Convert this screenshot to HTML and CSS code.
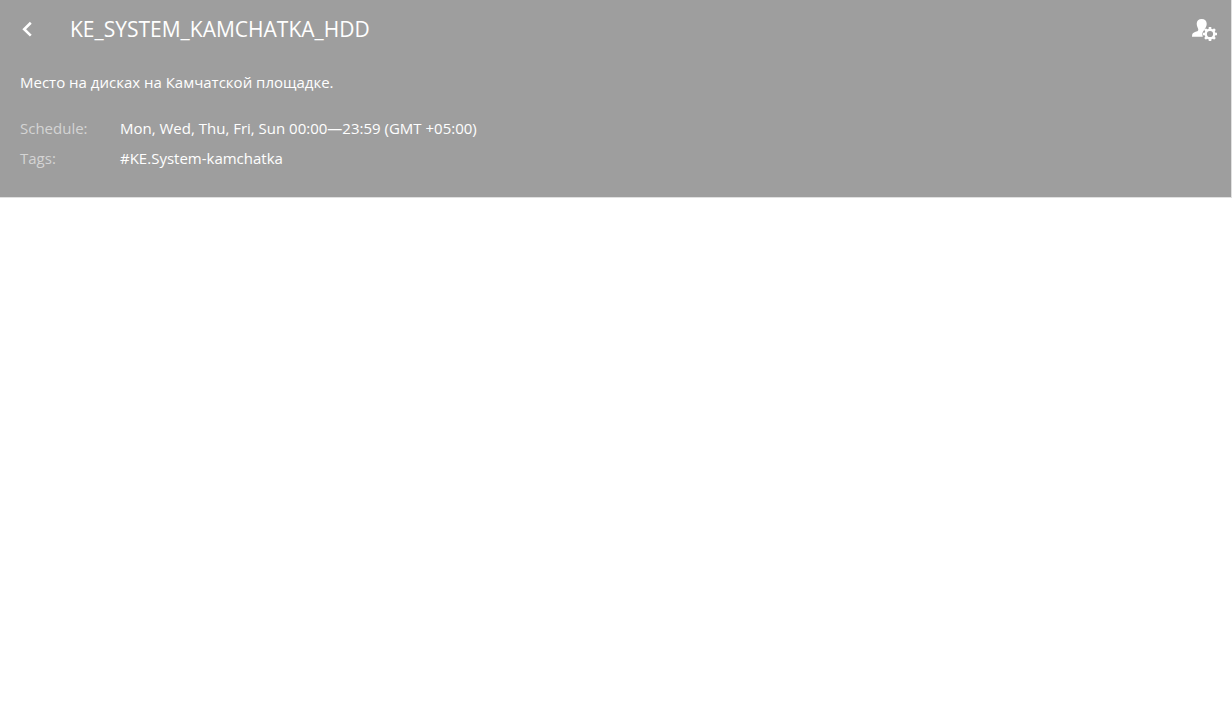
FILE: index.html
```html
<!DOCTYPE html>
<html lang="en">
<head>
<meta charset="utf-8">
<meta name="viewport" content="width=device-width, initial-scale=1">
<title>KE_SYSTEM_KAMCHATKA_HDD</title>
<link rel="stylesheet" href="styles.css">
</head>
<body>
<header class="trigger">
  <div class="trigger-bar">
    <a class="back-link" href="#" aria-label="Back">
      <svg width="14" height="16" viewBox="0 0 14 16" aria-hidden="true"><path d="M10.800 1.800 4.200 8.200l6.600 6.400" fill="none" stroke="#fff" stroke-width="2.600"/></svg>
    </a>
    <h1 class="trigger-title">KE_SYSTEM_KAMCHATKA_HDD</h1>
    <button class="user-button" type="button" aria-label="User settings">
      <svg width="26" height="24" viewBox="0 0 26 24" aria-hidden="true">
        <path d="M9.700 2c3.100 0 5 1.900 5 4.800 0 2-.7 3.700-1.900 5v1c-1.800 1.200-2.600 2.900-2.400 4.700.1 1 .2 1.500.4 2.200H0c0-2.700.8-3.900 3-4.600 2-.6 3.300-1.100 3.300-2.300 0-.8-.3-1.500-.7-2.300-.5-1-.9-2.200-.9-3.700C4.700 3.900 6.600 2 9.700 2Z" fill="#fff"/>
        <circle cx="18" cy="17" r="4.300" fill="none" stroke="#fff" stroke-width="2.400"/>
        <path d="M18 10v2.500M18 21.500V24M11 17h2.500M22.500 17H25M13.050 12.050l1.800 1.800M21.150 20.150l1.800 1.800M13.050 21.950l1.800-1.800M21.150 13.850l1.800-1.800" fill="none" stroke="#fff" stroke-width="2.600"/>
      </svg>
    </button>
  </div>
  <p class="description">Место на дисках на Камчатской площадке.</p>
  <dl class="details">
    <dt>Schedule:</dt>
    <dd>Mon, Wed, Thu, Fri, Sun 00:00—23:59 (GMT +05:00)</dd>
    <dt>Tags:</dt>
    <dd><a class="tag" href="#">#KE.System-kamchatka</a></dd>
  </dl>
</header>
</body>
</html>
```
FILE: styles.css
```css
body {
  margin: 0;
  background: #fff;
  color: #fff;
  font: 15px/20px "Segoe UI", "Open Sans", sans-serif;
}
.trigger {
  background: #9e9e9e;
  border-right: 1px solid #e0e0e0;
  border-bottom: 1px solid #e0e0e0;
  padding: 0 13px 29px 20px;
}
.trigger-bar {
  display: flex;
  align-items: center;
  height: 58px;
}
.back-link {
  display: flex;
  width: 50px;
}
.trigger-title {
  flex: 1;
  margin: 0;
  font-size: 21px;
  line-height: 30px;
  font-weight: 400;
}
.user-button {
  display: flex;
  padding: 0;
  border: 0;
  background: none;
}
.description {
  margin: 14px 0 26px;
}
.details {
  display: grid;
  grid-template-columns: 100px 1fr;
  row-gap: 10px;
  margin: 0;
}
.details dt {
  color: #d4d4d4;
}
.details dd {
  margin: 0;
}
.tag {
  color: inherit;
  text-decoration: none;
}
```
